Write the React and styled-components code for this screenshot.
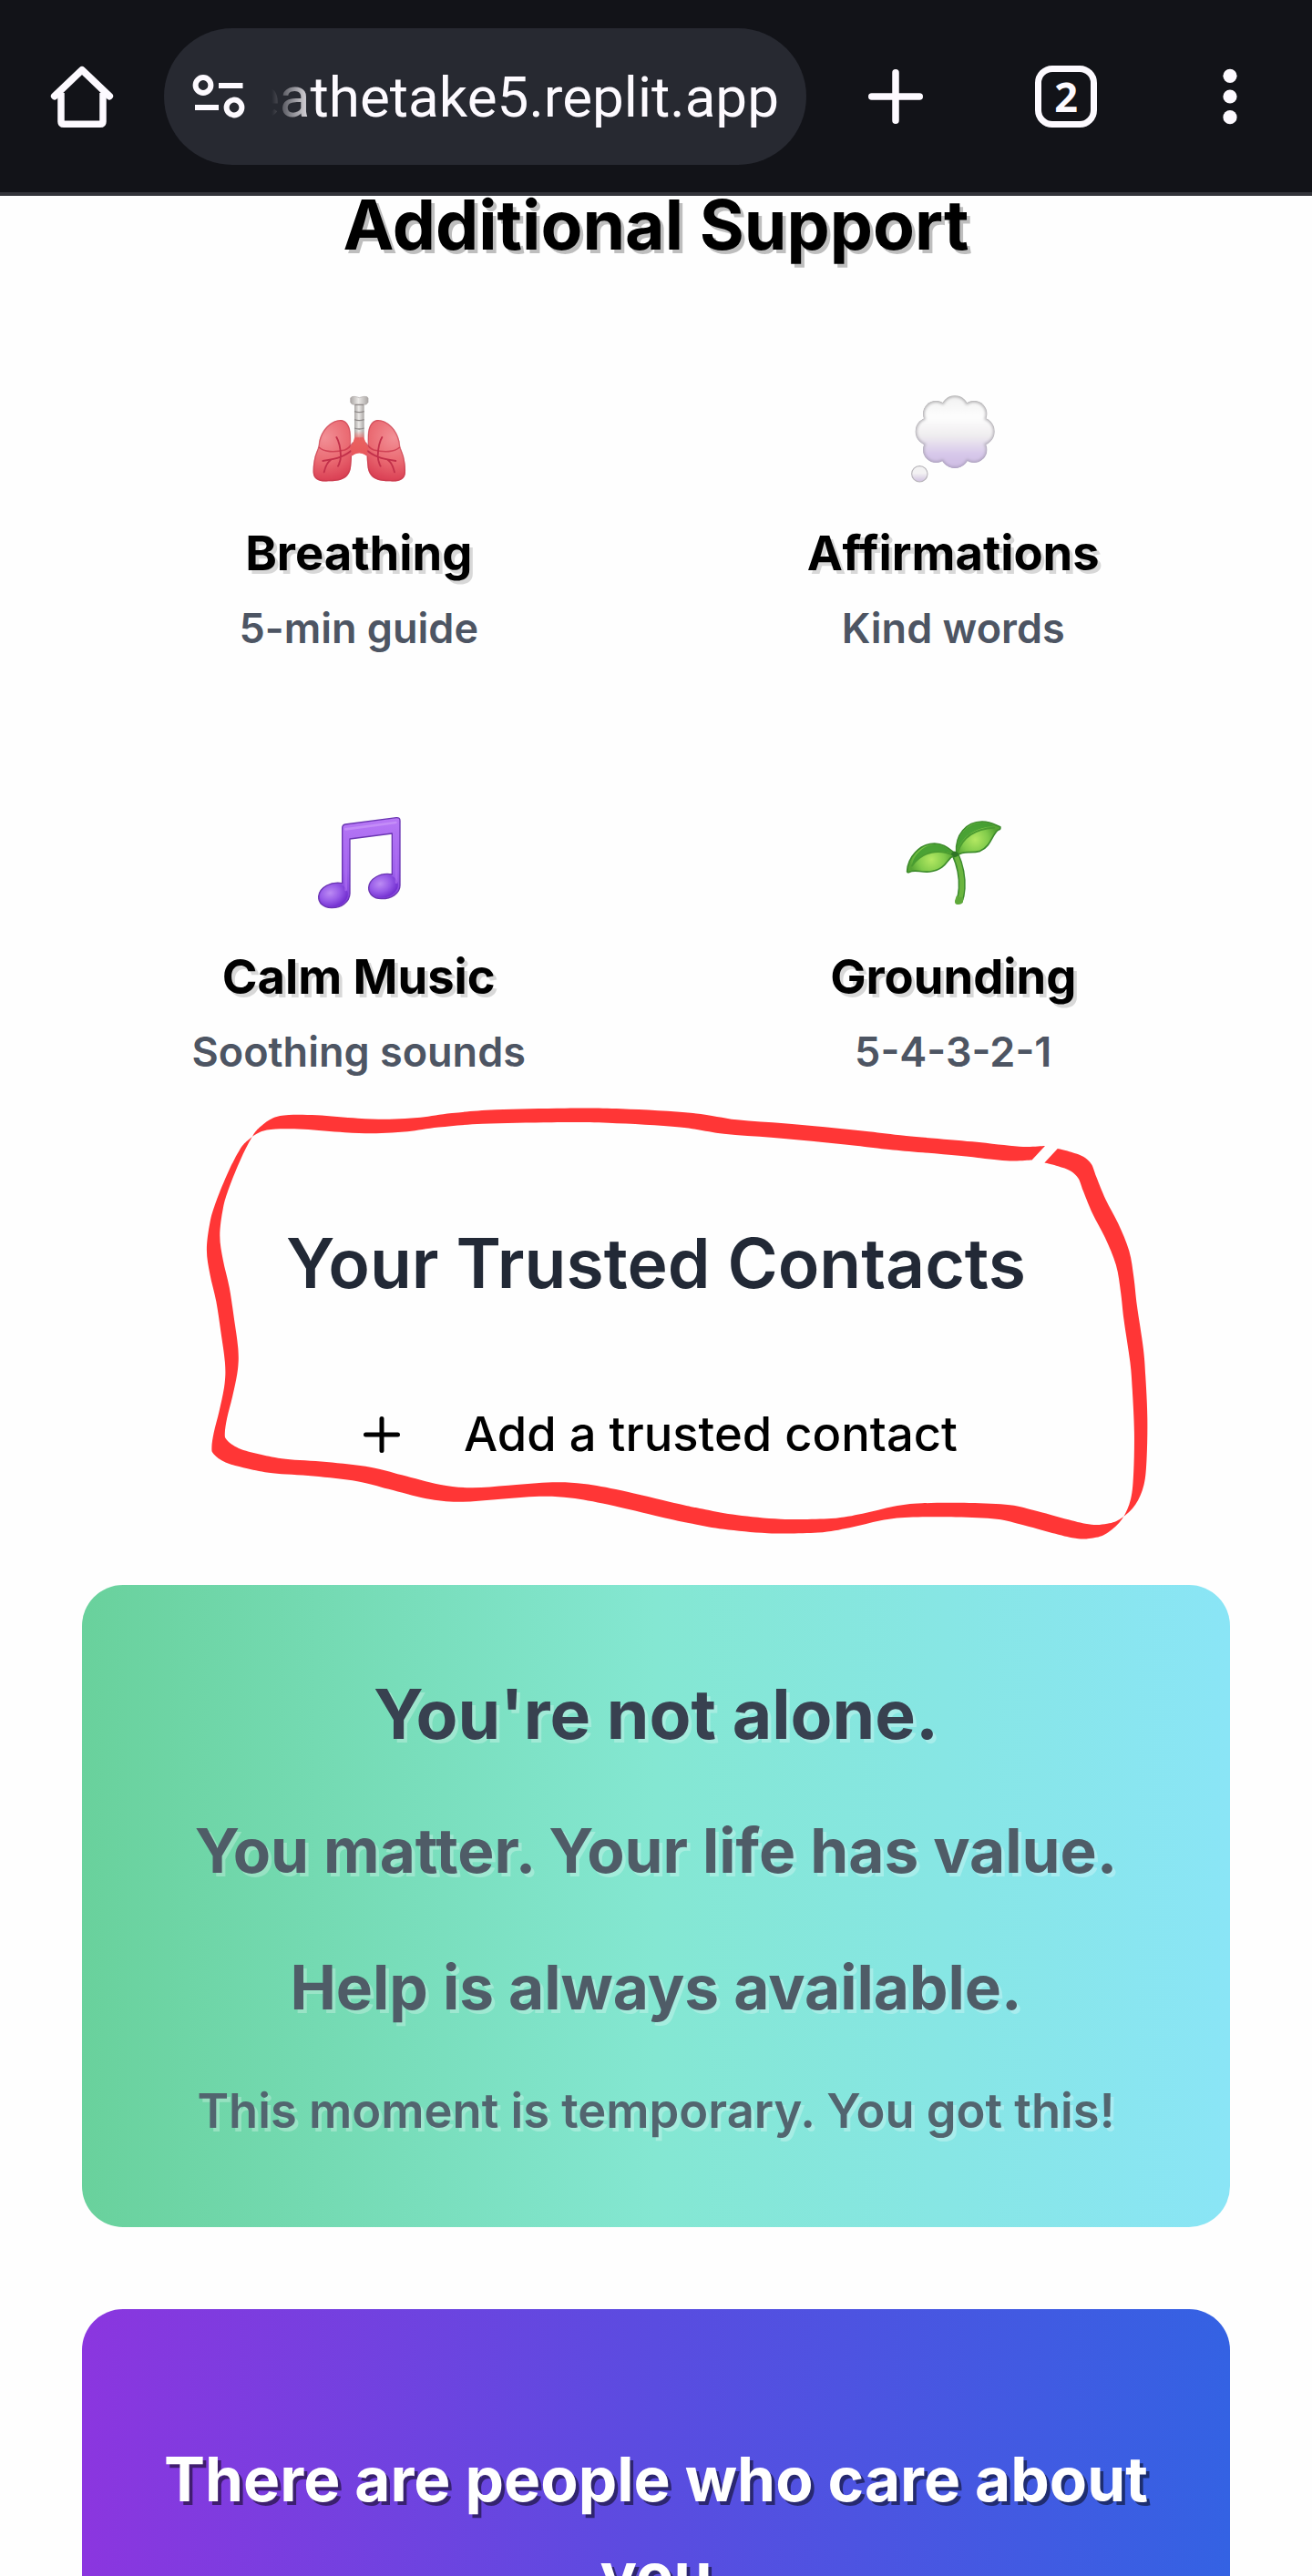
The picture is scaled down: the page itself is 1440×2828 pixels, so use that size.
import React from "react";
import styled, { createGlobalStyle, css } from "styled-components";

const GlobalStyle = createGlobalStyle`
  * { box-sizing: border-box; margin: 0; }
  html, body { margin: 0; padding: 0; background: #fefefe; }
  body { font-family: Inter, "Liberation Sans", sans-serif; overflow: hidden; }
`;

const Screen = styled.div`
  width: 1440px;
  height: 2828px;
  overflow: hidden;
  display: flex;
  flex-direction: column;
  background: #fefefe;
`;

const BrowserBar = styled.header`
  flex: none;
  height: 215px;
  display: flex;
  align-items: center;
  background: #121318;
  border-bottom: 4px solid #33343a;
`;

const BarButton = styled.button`
  border: 0;
  padding: 0;
  background: none;
  color: #fdfaff;
  width: ${(p) => p.$w}px;
  height: 150px;
  display: flex;
  align-items: center;
  justify-content: center;
`;

const AddressPill = styled.div`
  width: 705px;
  height: 150px;
  border-radius: 75px;
  background: #272931;
  color: #fdfaff;
  display: flex;
  align-items: center;
  padding: 0 30px;
`;

const UrlClip = styled.div`
  flex: 1;
  min-width: 0;
  height: 90px;
  padding-top: 2px;
  margin-left: 20px;
  display: flex;
  align-items: center;
  justify-content: flex-end;
  overflow: hidden;
  mask-image: linear-gradient(to right, transparent 8px, #000 56px);
`;

const Url = styled.span`
  flex: none;
  font: 400 62px/88px Roboto, "Liberation Sans", sans-serif;
  white-space: nowrap;
`;

const TabCount = styled.span`
  width: 68px;
  height: 68px;
  border: 7.5px solid #fdfaff;
  border-radius: 19px;
  display: flex;
  align-items: center;
  justify-content: center;
  font: 700 45px/50px "Open Sans", sans-serif;
`;

const Viewport = styled.main`
  flex: 1;
  min-height: 0;
  overflow: hidden;
`;

const Page = styled.div`
  margin-top: -20.8px;
  padding: 0 90px;
  display: flex;
  flex-direction: column;
`;

const SectionTitle = styled.h2`
  font-size: 75px;
  line-height: 105px;
  font-weight: 700;
  text-align: center;
  color: #000;
  text-shadow: 3.75px 3.75px 0 rgba(0, 0, 0, 0.25);
`;

const TileGrid = styled.div`
  margin-top: 60.5px;
  display: grid;
  grid-template-columns: 1fr 1fr;
  gap: 45px;
`;

const Tile = styled.article`
  height: 420px;
  padding: 60px 0;
  display: flex;
  flex-direction: column;
  align-items: center;
`;

const TileArt = styled.svg`
  width: 150px;
  height: 120px;
  margin-bottom: 30px;
  overflow: visible;
`;

const TileName = styled.h3`
  font-size: 52.5px;
  line-height: 75px;
  font-weight: 700;
  color: #000;
  text-shadow: 3.75px 3.75px 0 rgba(0, 0, 0, 0.15);
`;

const TileHint = styled.p`
  margin-top: 15px;
  font-size: 45px;
  line-height: 60px;
  font-weight: 600;
  color: #4d5563;
`;

const Contacts = styled.section`
  position: relative;
  margin: 89.5px 0 90px;
  display: flex;
  flex-direction: column;
  align-items: center;
`;

const ContactsTitle = styled.h2`
  font-size: 75px;
  line-height: 105px;
  font-weight: 600;
  color: #222936;
`;

const AddButton = styled.button`
  margin-top: 60.5px;
  height: 150px;
  border: 0;
  padding: 0;
  background: none;
  display: flex;
  align-items: center;
  gap: 60px;
  color: #000;
  font: 500 52.5px/75px Inter, "Liberation Sans", sans-serif;
`;

const Scribble = styled.svg`
  position: absolute;
  left: -90px;
  top: -134.2px;
  width: 1440px;
  height: 520px;
  pointer-events: none;
`;

const Card = styled.section`
  border-radius: 45px;
  display: flex;
  flex-direction: column;
  gap: 45px;
  text-align: center;
  ${(p) =>
    p.$tone === "calm"
      ? css`
          height: 705px;
          padding: 89.5px 90px 90px;
          background: linear-gradient(to right, #69d19c, #84e7d2 50%, #8ae5f6);
        `
      : css`
          margin-top: 90px;
          height: 600px;
          padding: 134.5px 60px;
          background: linear-gradient(to right, #8b36df, #5a4ce0 50%, #3462e3);
        `}
`;

const lineStyles = {
  lead: css`
    font-size: 75px;
    line-height: 105px;
    font-weight: 700;
    color: #384150;
  `,
  strong: css`
    font-size: 67.5px;
    line-height: 105px;
    font-weight: 700;
    color: #4f5c67;
  `,
  soft: css`
    margin-top: 0.5px;
    font-size: 52.5px;
    line-height: 75px;
    font-weight: 600;
    color: #52656f;
  `,
  inverse: css`
    font-size: 67.5px;
    line-height: 105px;
    font-weight: 700;
    color: #fff;
  `,
};

const Line = styled.p`
  ${(p) => lineStyles[p.$kind]}
  font-variant-ligatures: none;
  text-shadow: 3.75px 3.75px 0
    ${(p) => (p.$kind === "inverse" ? "rgba(0, 0, 0, 0.5)" : "rgba(255, 255, 255, 0.27)")};
`;

/* ---- browser icons ---- */

const HomeIcon = () => (
  <svg width="72" height="72" viewBox="54 70 72 72" fill="none" stroke="currentColor">
    <path d="M67 102V133.5Q67 136.3 70 136.3H110Q113 136.3 113 133.5V102" strokeWidth="7.5" />
    <path d="M59.8 105.6L90 76.8L120.2 105.6" strokeWidth="7.8" strokeLinecap="round" strokeLinejoin="round" />
  </svg>
);

const TuneIcon = () => (
  <svg width="60" height="60" viewBox="210 76 60 60" fill="none" stroke="currentColor" strokeWidth="6">
    <circle cx="223" cy="93.5" r="8.4" />
    <path d="M240 94H266.5M214 118H240" />
    <circle cx="257" cy="118" r="8.4" />
  </svg>
);

const NewTabIcon = () => (
  <svg width="60" height="60" viewBox="0 0 60 60" stroke="currentColor" strokeWidth="7.5" strokeLinecap="round">
    <path d="M30 3.75V56.25M3.75 30H56.25" />
  </svg>
);

const MenuIcon = () => (
  <svg width="16" height="62" viewBox="0 0 16 62" fill="currentColor">
    <circle cx="8" cy="8.3" r="7.6" />
    <circle cx="8" cy="31" r="7.6" />
    <circle cx="8" cy="53.7" r="7.6" />
  </svg>
);

const AddIcon = () => (
  <svg width="60" height="60" viewBox="0 0 24 24" stroke="currentColor" strokeWidth="2" strokeLinecap="round">
    <path d="M5 12H19M12 5V19" />
  </svg>
);

/* ---- tile drawings ---- */

const lungShape =
  "M518 182C488 184 458 214 450 252C449 264 448 270 446 276C434 300 429 330 430 356C432 380 452 387 480 384C520 384 548 376 554 340C556 322 557 310 557 301C566 294 574 290 582 290L582 232L568 236C566 250 560 262 552 272C553 250 555 222 548 204C541 188 530 181 518 182Z";

const Lungs = () => (
  <TileArt viewBox="356 59 450 360">
    <defs>
      <radialGradient id="lungFill" gradientUnits="userSpaceOnUse" cx="468" cy="240" r="160">
        <stop offset="0" stopColor="#f29096" />
        <stop offset="0.5" stopColor="#ea6a72" />
        <stop offset="0.95" stopColor="#d83a50" />
      </radialGradient>
      <linearGradient id="windpipe" x1="0" x2="1">
        <stop offset="0" stopColor="#a9a5a3" />
        <stop offset="0.45" stopColor="#eceae8" />
        <stop offset="1" stopColor="#aaa6a4" />
      </linearGradient>
      <linearGradient id="throatFade" x1="0" x2="0" y1="0" y2="1">
        <stop offset="0" stopColor="#e8605f" stopOpacity="0" />
        <stop offset="0.4" stopColor="#e9615f" />
        <stop offset="1" stopColor="#e8575d" />
      </linearGradient>
      <g id="lungHalf">
        <path d={lungShape} fill="url(#lungFill)" />
        <path d="M518 184C489 186 460 214 451 254C450 266 449 270 447 276C436 300 431 330 432 356C434 378 452 384 480 382C520 382 545 374 552 340C554 322 555 310 555 301M552 272C553 250 555 222 547 205C540 189 530 183 518 184" fill="none" stroke="#c13c4c" strokeOpacity="0.55" strokeWidth="4" />
        <path d="M449 272C466 288 500 290 534 281C546 276 554 268 562 256" fill="none" stroke="#c52e45" strokeOpacity="0.7" strokeWidth="5" />
        <path d="M562 278C546 292 534 299 520 304C502 311 482 314 462 317M507 239C516 254 520 272 521 300C521 312 518 324 512 334M488 314C476 322 470 336 466 354" fill="none" stroke="#c2304a" strokeWidth="5.5" strokeLinecap="round" strokeLinejoin="round" />
      </g>
    </defs>
    <use href="#lungHalf" />
    <use href="#lungHalf" transform="translate(1164 0) scale(-1 1)" />
    <path d="M566 128H598V240H566Z" fill="url(#windpipe)" />
    <path d="M553 110Q555 104 566 105L576 107Q582 111 588 107L598 105Q610 104 611 110V124Q607 133 596 132H568Q556 132 553 124Z" fill="url(#windpipe)" stroke="#aaa5a3" strokeWidth="2" />
    <path d="M566 154Q582 160 598 154M566 181Q582 187 598 181M566 209Q582 215 598 209M568 132H596" stroke="#8e8988" strokeWidth="4" fill="none" />
    <path d="M566 218H598V238C600 254 606 262 613 272L604 300C594 289 570 289 560 300L551 272C559 262 565 252 566 238Z" fill="url(#throatFade)" />
  </TileArt>
);

const petals = [
  [565, 148, 46], [503, 162, 43], [628, 162, 43], [482, 220, 47],
  [649, 220, 47], [503, 280, 43], [628, 280, 43], [565, 293, 48],
];

const Thought = () => (
  <TileArt viewBox="334 59 450 360">
    <defs>
      <linearGradient id="cloudFill" gradientUnits="userSpaceOnUse" x1="0" x2="0" y1="102" y2="342">
        <stop offset="0" stopColor="#f1f1f1" />
        <stop offset="0.3" stopColor="#fdfdfd" />
        <stop offset="0.55" stopColor="#efedef" />
        <stop offset="0.8" stopColor="#d7c8ea" />
        <stop offset="1" stopColor="#cdbbe2" />
      </linearGradient>
      <linearGradient id="cloudEdge" gradientUnits="userSpaceOnUse" x1="0" x2="0" y1="102" y2="342">
        <stop offset="0" stopColor="#b4b3b4" />
        <stop offset="0.55" stopColor="#b9b6bc" />
        <stop offset="1" stopColor="#ad9fc2" />
      </linearGradient>
      <linearGradient id="dotFill" x1="0" x2="0" y1="0" y2="1">
        <stop offset="0.45" stopColor="#f3f2f3" />
        <stop offset="1" stopColor="#cfc0df" />
      </linearGradient>
      <filter id="puffSoft" x="-10%" y="-10%" width="120%" height="120%">
        <feGaussianBlur stdDeviation="5" />
      </filter>
      <clipPath id="cloudClip">
        {petals.map(([x, y, r], i) => (
          <circle key={i} cx={x} cy={y} r={r - 1} />
        ))}
        <circle cx="565" cy="220" r="90" />
      </clipPath>
    </defs>
    {petals.map(([x, y, r], i) => (
      <circle key={i} cx={x} cy={y} r={r} fill="url(#cloudEdge)" />
    ))}
    <g clipPath="url(#cloudClip)">
      <rect x="430" y="95" width="270" height="250" fill="url(#cloudEdge)" />
      <g filter="url(#puffSoft)">
        {petals.map(([x, y, r], i) => (
          <circle key={i} cx={x} cy={y} r={r - 5} fill="url(#cloudFill)" />
        ))}
        <circle cx="565" cy="220" r="86" fill="url(#cloudFill)" />
      </g>
    </g>
    <circle cx="449" cy="360" r="26" fill="url(#dotFill)" stroke="#b9b6bb" strokeWidth="3.5" />
  </TileArt>
);

const Notes = () => (
  <TileArt viewBox="356 74 450 360">
    <defs>
      <linearGradient id="noteFill" gradientUnits="userSpaceOnUse" x1="0" x2="0" y1="110" y2="410">
        <stop offset="0" stopColor="#b878f6" />
        <stop offset="0.6" stopColor="#9d60ec" />
        <stop offset="1" stopColor="#7a38d6" />
      </linearGradient>
      <radialGradient id="noteHead" cx="0.4" cy="0.35" r="0.7">
        <stop offset="0" stopColor="#bc8bf4" />
        <stop offset="0.5" stopColor="#985ce8" />
        <stop offset="1" stopColor="#6c28cc" />
      </radialGradient>
    </defs>
    <path d="M526 146Q526 136 536 134L704 112Q716 111 716 122V335C716 362 686 380 654 379C630 378 612 364 613 342C615 314 650 292 690 299V164L551 182V362C550 390 522 410 490 409C464 408 447 394 448 371C451 341 488 322 526 328Z" fill="url(#noteFill)" stroke="#6a35b2" strokeWidth="4" strokeLinejoin="round" />
    <ellipse cx="498" cy="368" rx="47" ry="37" transform="rotate(-16 498 368)" fill="url(#noteHead)" />
    <ellipse cx="663" cy="338" rx="47" ry="37" transform="rotate(-16 663 338)" fill="url(#noteHead)" />
    <path d="M537 150L702 128" stroke="#cf9efa" strokeWidth="8" strokeLinecap="round" opacity="0.6" />
    <path d="M538 190V350M704 160V325" stroke="#b070f4" strokeWidth="8" strokeLinecap="round" opacity="0.6" />
  </TileArt>
);

const Sprout = () => (
  <TileArt viewBox="334 74 450 360">
    <defs>
      <radialGradient id="leafLeft" gradientUnits="userSpaceOnUse" cx="488" cy="250" r="72">
        <stop offset="0" stopColor="#b4e862" />
        <stop offset="0.6" stopColor="#81cb4b" />
        <stop offset="1" stopColor="#56a434" />
      </radialGradient>
      <radialGradient id="leafRight" gradientUnits="userSpaceOnUse" cx="632" cy="184" r="72">
        <stop offset="0" stopColor="#b4e862" />
        <stop offset="0.6" stopColor="#81cb4b" />
        <stop offset="1" stopColor="#56a434" />
      </radialGradient>
    </defs>
    <path d="M566 232C582 268 590 310 588 345C587 362 584 376 579 388" fill="none" stroke="#3c8a2e" strokeWidth="24" />
    <path d="M570 240C583 272 590 310 588 345C587 362 584 376 579 386" fill="none" stroke="#6bb53f" strokeWidth="15" />
    <path d="M565 386Q564 398 574 398Q588 399 591 390L594 376L570 370Z" fill="#5fa93a" />
    <path d="M408 288C410 244 448 198 498 197C530 198 546 216 564 228C566 238 560 240 552 243C538 256 530 284 482 290C450 293 432 280 414 292Q407 293 408 288Z" fill="url(#leafLeft)" stroke="#3d8b2c" strokeWidth="5" />
    <path d="M424 268C430 230 468 199 500 200C530 202 546 220 562 231C520 216 464 218 424 268Z" fill="#3f9a30" opacity="0.85" />
    <path d="M424 270C460 220 515 214 562 236" fill="none" stroke="#4b9c31" strokeWidth="6" strokeLinecap="round" />
    <path d="M570 226C566 170 602 124 656 125C684 125 698 136 714 142Q717 150 709 152C690 160 686 206 648 222C616 232 594 218 574 236Z" fill="url(#leafRight)" stroke="#3d8b2c" strokeWidth="5" />
    <path d="M574 216C572 168 606 130 654 128C672 129 684 134 692 139C640 146 596 164 574 216Z" fill="#3f9a30" opacity="0.85" />
    <path d="M574 226C592 170 640 148 694 145" fill="none" stroke="#4b9c31" strokeWidth="6" strokeLinecap="round" />
    <path d="M552 232Q562 214 578 230Q574 242 562 242Z" fill="#2f7526" />
  </TileArt>
);

/* ---- hand-drawn marker loop: a slanted nib swept along these points ---- */

const loop = [
  [1147, 1258], [1118.8, 1258.7], [1067.1, 1253.3], [994.8, 1247], [953.5, 1242.3], [905.3, 1237.3],
  [860.5, 1233.3], [808.9, 1229.3], [760.7, 1222], [682, 1217.3], [620, 1216.7], [544.4, 1218.3],
  [496, 1222], [461.7, 1226.7], [427.3, 1228.7], [392.8, 1227.7], [348, 1224.3], [317, 1224],
  [299.9, 1227.3], [286, 1236.7], [277.5, 1246.7], [265.4, 1270], [251.7, 1303.3], [244.8, 1326.7],
  [241.3, 1356.7], [244.8, 1383.3], [251.7, 1413.3], [256.8, 1446.7], [261.3, 1480], [261, 1503.3],
  [255.1, 1533.3], [249.2, 1556.7], [246.8, 1573.3], [248.9, 1580.7], [262, 1590], [286, 1596.7],
  [313.6, 1601.7], [358.4, 1605], [406.6, 1610.7], [441, 1619.3], [482.4, 1629.7], [516.8, 1633.3],
  [558, 1630.7], [606.3, 1627.3], [640.8, 1629], [682, 1636.3], [740, 1650], [774.4, 1657.3],
  [808.9, 1663.3], [857, 1667.7], [912.2, 1667], [946.6, 1661.7], [981, 1653.7], [1012, 1650.3],
  [1063.7, 1650], [1108.5, 1652.3], [1139.4, 1659.3], [1191.1, 1672.7], [1215.2, 1672.7],
  [1230.7, 1666.7], [1246.2, 1651.7], [1255.5, 1630], [1258.6, 1600], [1259.3, 1556.7],
  [1257.2, 1510], [1254.8, 1480], [1247.9, 1433.3], [1244.5, 1403.3], [1239.3, 1373.3],
  [1227.3, 1343.3], [1213.5, 1316.7], [1203.2, 1291.7], [1198, 1278.3], [1189.4, 1270],
  [1175.6, 1264.7], [1160.8, 1261],
];

const curve = (pts) =>
  pts
    .slice(0, -1)
    .map((p, i) => {
      const a = pts[i - 1] || p;
      const q = pts[i + 1];
      const b = pts[i + 2] || q;
      const n = [
        p[0] + (q[0] - a[0]) / 6, p[1] + (q[1] - a[1]) / 6,
        q[0] - (b[0] - p[0]) / 6, q[1] - (b[1] - p[1]) / 6,
        q[0], q[1],
      ];
      return "C" + n.map((v) => v.toFixed(1)).join(" ");
    })
    .join("");

const nibEdge = loop.map(([x, y]) => [x - 14.4, y + 15.5]).reverse();
const loopPath = `M${loop[0]}${curve(loop)}L${nibEdge[0]}${curve(nibEdge)}Z`;

const tiles = [
  { name: "Breathing", hint: "5-min guide", Art: Lungs },
  { name: "Affirmations", hint: "Kind words", Art: Thought },
  { name: "Calm Music", hint: "Soothing sounds", Art: Notes },
  { name: "Grounding", hint: "5-4-3-2-1", Art: Sprout },
];

export default function App() {
  return (
    <>
      <GlobalStyle />
      <Screen>
        <BrowserBar>
          <BarButton $w={180} aria-label="Home"><HomeIcon /></BarButton>
          <AddressPill>
            <TuneIcon />
            <UrlClip><Url>eathetake5.replit.app</Url></UrlClip>
          </AddressPill>
          <BarButton $w={196} aria-label="New tab"><NewTabIcon /></BarButton>
          <BarButton $w={178} aria-label="Tabs"><TabCount>2</TabCount></BarButton>
          <BarButton $w={181} aria-label="Menu"><MenuIcon /></BarButton>
        </BrowserBar>
        <Viewport>
          <Page>
            <SectionTitle>Additional Support</SectionTitle>
            <TileGrid>
              {tiles.map(({ name, hint, Art }) => (
                <Tile key={name}>
                  <Art />
                  <TileName>{name}</TileName>
                  <TileHint>{hint}</TileHint>
                </Tile>
              ))}
            </TileGrid>
            <Contacts>
              <ContactsTitle>Your Trusted Contacts</ContactsTitle>
              <AddButton>
                <AddIcon />
                <span>Add a trusted contact</span>
              </AddButton>
              <Scribble viewBox="0 1200 1440 520">
                <path d={loopPath} fill="#ff3636" />
              </Scribble>
            </Contacts>
            <Card $tone="calm">
              <Line $kind="lead">You're not alone.</Line>
              <Line $kind="strong">You matter. Your life has value.</Line>
              <Line $kind="strong">Help is always available.</Line>
              <Line $kind="soft">This moment is temporary. You got this!</Line>
            </Card>
            <Card $tone="vivid">
              <Line $kind="inverse">There are people who care about you</Line>
            </Card>
          </Page>
        </Viewport>
      </Screen>
    </>
  );
}
